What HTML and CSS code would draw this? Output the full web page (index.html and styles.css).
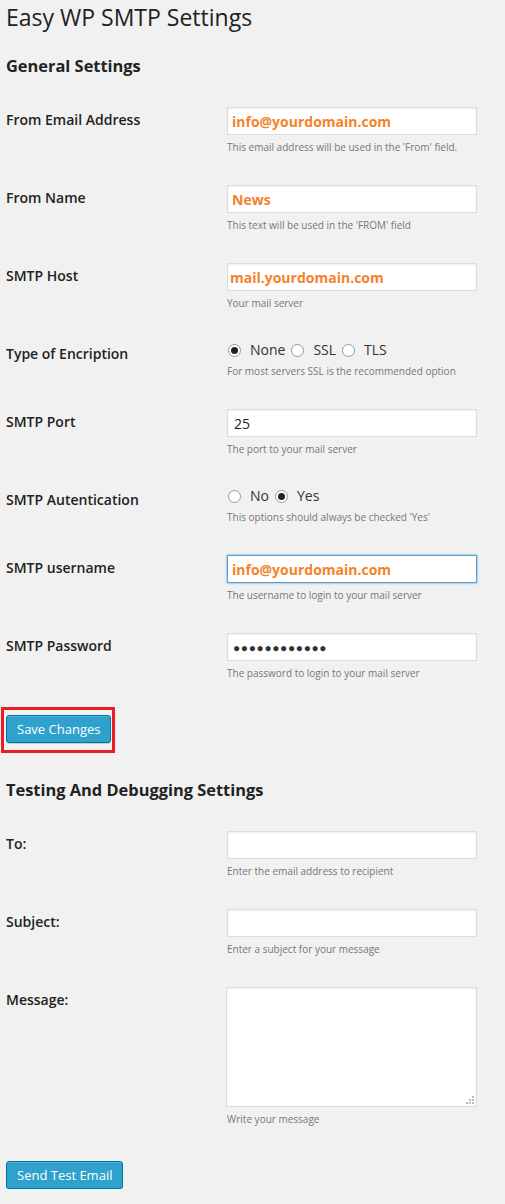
FILE: index.html
```html
<!DOCTYPE html>
<html>
<head>
<meta charset="utf-8">
<link rel="stylesheet" href="styles.css">
</head>
<body>
<div class="wrap">
  <h1 class="title">Easy WP SMTP Settings</h1>
  <h2 class="section">General Settings</h2>
  <div class="row">
    <div class="label">From Email Address</div>
    <div class="field">
      <div class="input filled">info@yourdomain.com</div>
      <div class="desc">This email address will be used in the 'From' field.</div>
    </div>
  </div>
  <div class="row">
    <div class="label">From Name</div>
    <div class="field">
      <div class="input filled">News</div>
      <div class="desc">This text will be used in the 'FROM' field</div>
    </div>
  </div>
  <div class="row">
    <div class="label">SMTP Host</div>
    <div class="field">
      <div class="input filled host">mail.yourdomain.com</div>
      <div class="desc">Your mail server</div>
    </div>
  </div>
  <div class="row">
    <div class="label">Type of Encription</div>
    <div class="field">
      <div class="radios">
        <span class="radio checked"></span><span class="rlabel">None</span>
        <span class="radio"></span><span class="rlabel">SSL</span>
        <span class="radio"></span><span class="rlabel">TLS</span>
      </div>
      <div class="desc rdesc">For most servers SSL is the recommended option</div>
    </div>
  </div>
  <div class="row">
    <div class="label">SMTP Port</div>
    <div class="field">
      <div class="input plain">25</div>
      <div class="desc">The port to your mail server</div>
    </div>
  </div>
  <div class="row">
    <div class="label">SMTP Autentication</div>
    <div class="field">
      <div class="radios">
        <span class="radio"></span><span class="rlabel">No</span>
        <span class="radio checked"></span><span class="rlabel">Yes</span>
      </div>
      <div class="desc rdesc">This options should always be checked 'Yes'</div>
    </div>
  </div>
  <div class="row">
    <div class="label">SMTP username</div>
    <div class="field">
      <div class="input filled focus">info@yourdomain.com</div>
      <div class="desc">The username to login to your mail server</div>
    </div>
  </div>
  <div class="row">
    <div class="label">SMTP Password</div>
    <div class="field">
      <div class="input plain dots">●●●●●●●●●●●●</div>
      <div class="desc">The password to login to your mail server</div>
    </div>
  </div>
  <div class="submit">
    <span class="highlight"><span class="button">Save Changes</span></span>
  </div>
  <h2 class="section second">Testing And Debugging Settings</h2>
  <div class="row">
    <div class="label">To:</div>
    <div class="field">
      <div class="input"></div>
      <div class="desc">Enter the email address to recipient</div>
    </div>
  </div>
  <div class="row">
    <div class="label">Subject:</div>
    <div class="field">
      <div class="input"></div>
      <div class="desc">Enter a subject for your message</div>
    </div>
  </div>
  <div class="row">
    <div class="label">Message:</div>
    <div class="field">
      <div class="textarea">
        <svg class="grip" width="9" height="9" viewBox="0 0 9 9"><rect x="6" y="0" width="2" height="2" fill="#bbb"/><rect x="3" y="3" width="2" height="2" fill="#bbb"/><rect x="6" y="3" width="2" height="2" fill="#bbb"/><rect x="0" y="6" width="2" height="2" fill="#bbb"/><rect x="3" y="6" width="2" height="2" fill="#bbb"/><rect x="6" y="6" width="2" height="2" fill="#bbb"/></svg>
      </div>
      <div class="desc">Write your message</div>
    </div>
  </div>
  <div class="submit2">
    <span class="button">Send Test Email</span>
  </div>
</div>
</body>
</html>
```
FILE: styles.css
```css
html, body {
  margin: 0;
  padding: 0;
  background: #f1f1f1;
}
body {
  font-family: "Open Sans", "Noto Sans", sans-serif;
  color: #222;
}
.wrap {
  padding: 0 0 0 6px;
}
.title {
  margin: 0;
  padding-top: 2px;
  font-size: 23px;
  font-weight: 400;
  line-height: 30px;
  color: #222;
}
.section {
  margin: 0 0 15px;
  padding-top: 23px;
  font-size: 16.4px;
  font-weight: 700;
  line-height: 22px;
  color: #222;
}
.section.second {
  padding-top: 26px;
}
.row {
  display: grid;
  grid-template-columns: 221px 250px;
  padding: 15px 0 16px;
}
.label {
  font-size: 14px;
  font-weight: 600;
  line-height: 18px;
  padding-top: 4px;
  color: #222;
}
.field {
  display: flex;
  flex-direction: column;
}
.input {
  box-sizing: border-box;
  height: 28px;
  border: 1px solid #ddd;
  background: #fff;
  box-shadow: inset 0 1px 2px rgba(0,0,0,.07);
  padding: 0 0 0 4px;
  font-size: 14px;
  line-height: 26px;
}
.input.filled {
  color: #f5822b;
  font-weight: 700;
  font-size: 14px;
  padding-top: 1px;
  line-height: 26px;
}
.input.host {
  padding-left: 2px;
}
.input.plain {
  color: #222;
  padding-left: 6px;
  line-height: 27px;
}
.input.dots {
  font-size: 12px;
  letter-spacing: 0.6px;
  color: #333;
  padding-left: 5px;
}
.input.focus {
  border-color: #5b9dd9;
  box-shadow: 0 0 2px rgba(30,140,190,.8);
}
.desc {
  margin-top: 6px;
  font-size: 10px;
  line-height: 13px;
  color: #777;
}
.rdesc {
  margin-top: 6px;
}
.radios {
  display: flex;
  align-items: center;
  height: 18px;
  font-size: 14px;
  line-height: 18px;
  color: #333;
}
.radio {
  box-sizing: border-box;
  width: 13px;
  height: 13px;
  border-radius: 50%;
  border: 1px solid #999;
  background: #fff;
  margin-left: 1px;
  margin-right: 9px;
  display: flex;
  align-items: center;
  justify-content: center;
}
.radio.checked::after {
  content: "";
  width: 7px;
  height: 7px;
  border-radius: 50%;
  background: #222;
}
.rlabel {
  margin-right: 6px;
}
.rlabel + .radio {
  margin-left: 0;
}
.submit {
  padding-top: 11px;
  margin-left: -5px;
}
.highlight {
  display: inline-block;
  border: 3px solid #ed1c24;
  padding: 5px 1px 7px 2px;
}
.button {
  display: inline-block;
  box-sizing: border-box;
  height: 28px;
  padding: 0 10px;
  background: #2ea2cc;
  border: 1px solid #0074a2;
  border-radius: 3px;
  box-shadow: inset 0 1px 0 rgba(120,200,230,.5), 0 1px 0 rgba(0,0,0,.15);
  color: #fff;
  font-size: 13px;
  line-height: 26px;
  vertical-align: top;
}
.textarea {
  position: relative;
  box-sizing: border-box;
  width: 251px;
  margin-left: -1px;
  height: 120px;
  border: 1px solid #ddd;
  background: #fff;
  box-shadow: inset 0 1px 2px rgba(0,0,0,.07);
}
.grip {
  position: absolute;
  right: 1px;
  bottom: 1px;
}
.submit2 {
  padding-top: 19px;
}
```
